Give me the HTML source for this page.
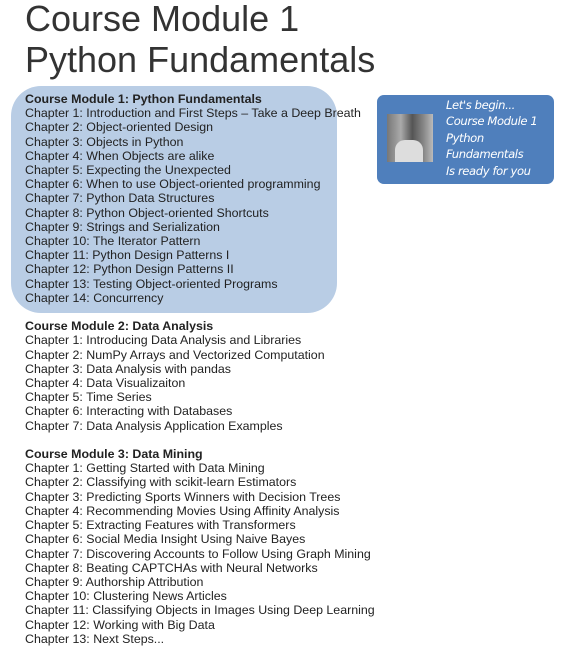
<!DOCTYPE html>
<html><head><meta charset="utf-8"><style>
body{margin:0;width:566px;height:654px;background:#fff;font-family:"Liberation Sans",sans-serif;color:#222;position:relative;overflow:hidden}
.t{position:absolute;left:25px;font-size:36px;color:#333;line-height:40px;top:0}
.box{position:absolute;left:11px;top:86px;width:326px;height:227px;background:#b9cde5;border-radius:30px}
.list{position:absolute;left:25px;font-size:12.4px;line-height:14.2px;white-space:nowrap}
.list b{font-weight:bold}
.card{position:absolute;left:377px;top:95px;width:177px;height:89px;background:#4f7fbc;border-radius:7px}
.ph{position:absolute;left:10px;top:19px;width:46px;height:48px;background:linear-gradient(90deg,#777 0,#aaa 30%,#555 55%,#888 80%,#bbb 100%)}
.ph:after{content:"";position:absolute;left:8px;top:26px;width:28px;height:22px;background:#ddd;border-radius:10px 10px 0 0}
.ct{position:absolute;left:69px;top:2px;color:#fff;font-style:italic;font-size:11.6px;line-height:16.4px;font-family:"DejaVu Sans","Liberation Sans",sans-serif;letter-spacing:-0.4px}
</style></head><body>
<div class="t" style="top:-1px">Course Module 1</div>
<div class="t" style="top:40px">Python Fundamentals</div>
<div class="box"></div>
<div class="list" style="top:92px"><b>Course Module 1: Python Fundamentals</b><br>Chapter 1: Introduction and First Steps – Take a Deep Breath<br>Chapter 2: Object-oriented Design<br>Chapter 3: Objects in Python<br>Chapter 4: When Objects are alike<br>Chapter 5: Expecting the Unexpected<br>Chapter 6: When to use Object-oriented programming<br>Chapter 7: Python Data Structures<br>Chapter 8: Python Object-oriented Shortcuts<br>Chapter 9: Strings and Serialization<br>Chapter 10: The Iterator Pattern<br>Chapter 11: Python Design Patterns I<br>Chapter 12: Python Design Patterns II<br>Chapter 13: Testing Object-oriented Programs<br>Chapter 14: Concurrency<br><br><b>Course Module 2: Data Analysis</b><br>Chapter 1: Introducing Data Analysis and Libraries<br>Chapter 2: NumPy Arrays and Vectorized Computation<br>Chapter 3: Data Analysis with pandas<br>Chapter 4: Data Visualizaiton<br>Chapter 5: Time Series<br>Chapter 6: Interacting with Databases<br>Chapter 7: Data Analysis Application Examples<br><br><b>Course Module 3: Data Mining</b><br>Chapter 1: Getting Started with Data Mining<br>Chapter 2: Classifying with scikit-learn Estimators<br>Chapter 3: Predicting Sports Winners with Decision Trees<br>Chapter 4: Recommending Movies Using Affinity Analysis<br>Chapter 5: Extracting Features with Transformers<br>Chapter 6: Social Media Insight Using Naive Bayes<br>Chapter 7: Discovering Accounts to Follow Using Graph Mining<br>Chapter 8: Beating CAPTCHAs with Neural Networks<br>Chapter 9: Authorship Attribution<br>Chapter 10: Clustering News Articles<br>Chapter 11: Classifying Objects in Images Using Deep Learning<br>Chapter 12: Working with Big Data<br>Chapter 13: Next Steps...</div>
<div class="card"><div class="ph"></div><div class="ct">Let's begin...<br>Course Module 1<br>Python<br>Fundamentals<br>Is ready for you</div></div>
</body></html>
